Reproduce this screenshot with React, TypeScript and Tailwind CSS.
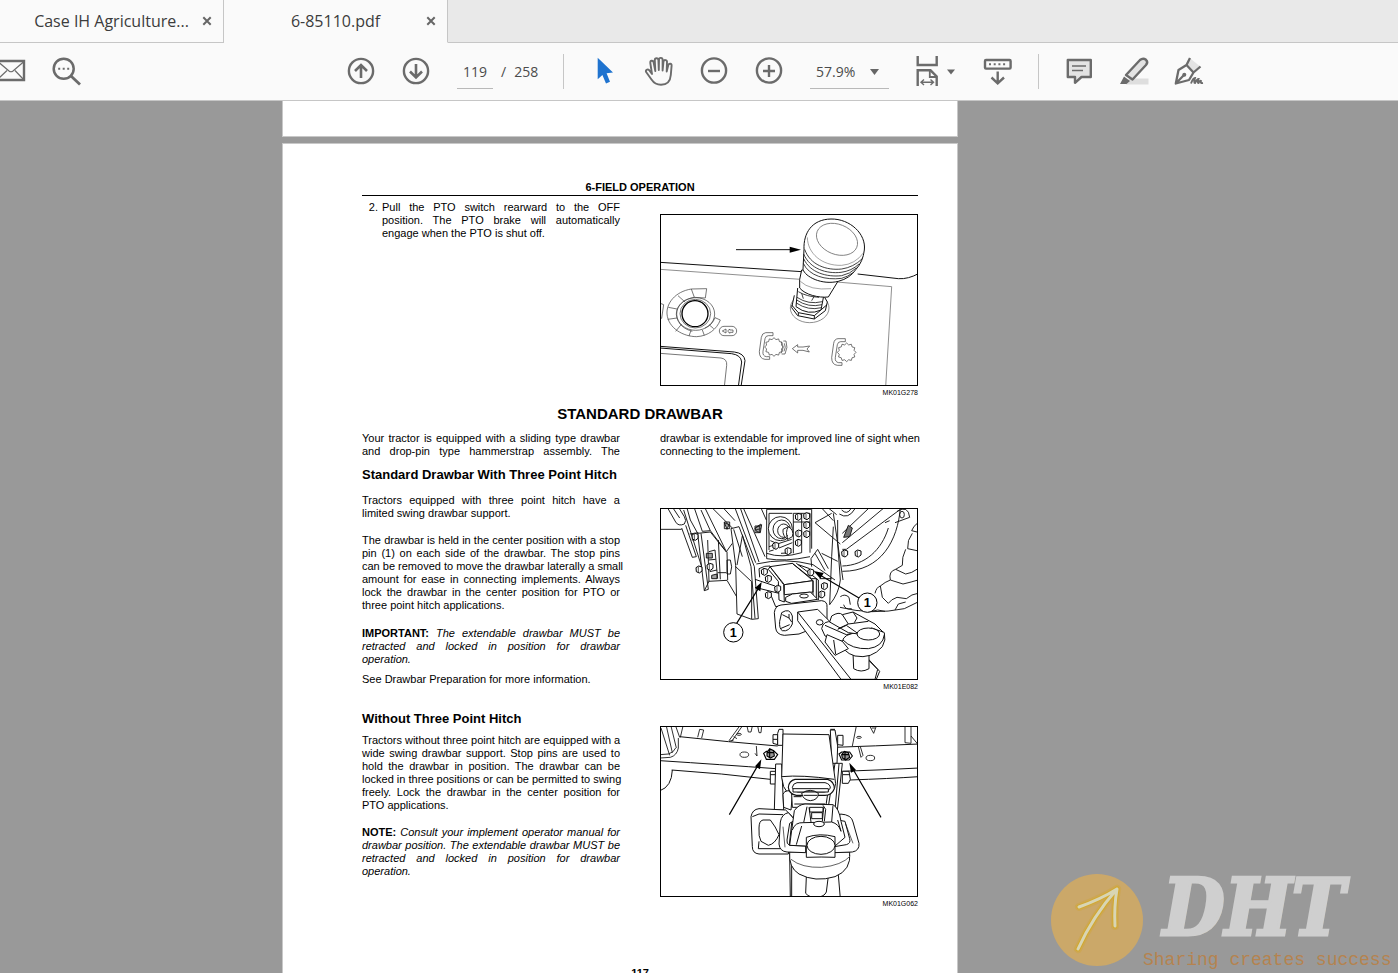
import { useState, type ReactNode } from "react";
import { clsx } from "clsx";

interface ToolProps {
  label: string;
  children: ReactNode;
  className?: string;
  viewBox?: string;
}

function Tool({ label, children, className, viewBox = "0 0 28 29" }: ToolProps) {
  return (
    <button type="button" aria-label={label} title={label} className={clsx("h-[29px] shrink-0", className ?? "w-7")}>
      <svg viewBox={viewBox} className="block h-full w-full overflow-visible" fill="none" stroke="#6b6b6b" strokeWidth="2.4">
        {children}
      </svg>
    </button>
  );
}

function Divider() {
  return <div className="-mx-px h-[35px] w-px shrink-0 bg-[#c6c6c6]" />;
}

function Tab({ title, active, onSelect }: { title: string; active: boolean; onSelect: () => void }) {
  return (
    <div
      className={clsx(
        "flex w-56 shrink-0 items-center border-r border-b border-r-[#c6c6c6] bg-[#fafafa] pl-8",
        active ? "border-b-[#fafafa]" : "border-b-[#c6c6c6]",
      )}
    >
      <button
        type="button"
        role="tab"
        aria-selected={active}
        onClick={onSelect}
        className="flex min-w-0 flex-1 justify-center text-base whitespace-nowrap text-[#3c3c3c]"
      >
        {title}
      </button>
      <button type="button" aria-label={`Close ${title}`} className="flex h-8 w-8 shrink-0 items-center justify-center">
        <svg viewBox="0 0 10 10" className="h-[10px] w-[10px]" stroke="#666" strokeWidth="2">
          <path d="M1.3 1.3 L8.7 8.7 M8.7 1.3 L1.3 8.7" />
        </svg>
      </button>
    </div>
  );
}

function Toolbar() {
  const [page, setPage] = useState("119");
  return (
    <div className="flex h-[58px] shrink-0 items-center gap-[27px] overflow-hidden border-b border-[#c6c6c6] bg-[#fafafa] text-sm text-[#4b4b4b]">
      <Tool label="Email" className="w-[25px]" viewBox="0 0 25 29">
        <path d="M-4 4 H24 V23 H-4 Z" />
        <path d="M-4 3 L9 14 Q11 15.5 13 14 L24 4.5 M-3 23 L7 13.5 M24 23 L15 13.5" strokeWidth="1.2" />
      </Tool>
      <Tool label="Find" className="mr-60 w-7">
        <circle cx="11.7" cy="11.7" r="10" strokeWidth="2.5" />
        <path d="M19 19 L28 27.5" strokeWidth="2.8" />
        <path d="M6.2 11.7 h2 M10.7 11.7 h2 M15.2 11.7 h2" strokeWidth="2" />
      </Tool>
      <Tool label="Previous page">
        <circle cx="14" cy="14" r="12.1" />
        <path d="M14 21 V8.5 M8 14 L14 8 L20 14" strokeWidth="2.6" />
      </Tool>
      <Tool label="Next page">
        <circle cx="14" cy="14" r="12.1" />
        <path d="M14 7 V20 M8 14.5 L14 20.5 L20 14.5" strokeWidth="2.6" />
      </Tool>
      <div className="flex w-[80px] shrink-0 items-center">
        <input
          aria-label="Page number"
          value={page}
          onChange={(e) => setPage(e.target.value)}
          className="h-[35px] w-9 border-b border-[#b9b9b9] bg-transparent text-center outline-none"
        />
        <span className="ml-2">/</span>
        <span className="ml-2">258</span>
      </div>
      <Divider />
      <Tool label="Select">
        <path d="M7.7 .7 V22.3 L12.4 18 L16 26.6 L20 24.8 L16.6 16.3 L23 15.6 Z" fill="#1f73cf" stroke="none" />
      </Tool>
      <Tool label="Pan">
        <path
          strokeWidth="1.9"
          strokeLinejoin="round"
          d="M7 17 L5.3 6 C5 3.3 8 3 8.6 5.3 L10.3 14 L9.8 3 C9.8 .6 13.2 .6 13.4 3 L13.8 13 L14 2.5 C14.2 .3 17.6 .3 17.6 3 V13.5 L18.5 4.5 C19 2.3 22.2 2.8 22 5 L21.7 14.5 L23.3 8 C24 6 27 6.5 26.6 8.6 L25.8 18 C25.3 24.5 21.5 27.8 16 27.8 C10.5 27.8 8.5 25.5 6.5 22.5 L1.3 15.3 C0 13 2.6 11.5 4.2 13.2 Z"
        />
      </Tool>
      <Tool label="Zoom out">
        <circle cx="14" cy="13.5" r="12.1" />
        <path d="M8 14 H20" />
      </Tool>
      <Tool label="Zoom in">
        <circle cx="14" cy="13.5" r="12.1" />
        <path d="M8 14 H20 M14 8 V20" />
      </Tool>
      <div className="relative w-[79px] shrink-0">
        <select aria-label="Zoom level" className="h-[35px] w-full appearance-none border-b border-[#b9b9b9] bg-transparent pt-[2px] pl-[6px] outline-none">
          <option>57.9%</option>
          <option>100%</option>
        </select>
        <svg viewBox="0 0 9 6" className="pointer-events-none absolute top-[15px] right-[10px] h-[6px] w-[9px]" fill="#666">
          <path d="M0 0 H9 L4.5 6 Z" />
        </svg>
      </div>
      <Tool label="Fit page" className="w-[41px]" viewBox="1 0 41 29">
        <path d="M2.7 -1 V8 H21.7 V-1 M2.7 29 V13.3 H15.5 L21.7 19.5 V29" />
        <path d="M14.8 13 V20 H22" strokeWidth="1.8" />
        <path d="M6 25.3 H18.5 M9 22.6 L6 25.3 L9 28 M15.5 22.6 L18.5 25.3 L15.5 28" strokeWidth="1.4" />
        <path d="M32 12.5 H40 L36 17.5 Z" fill="#666" stroke="none" />
      </Tool>
      <Tool label="Page controls" viewBox="1 0 28 29">
        <rect x="2" y="3" width="25.6" height="8.6" rx="1" />
        <path d="M6 7.3 h2 M10.7 7.3 h2 M15.4 7.3 h2 M20.1 7.3 h2" strokeWidth="2" />
        <path d="M14.7 14.5 V26 M8.5 20.5 L14.7 26.3 L21 20.5" />
      </Tool>
      <Divider />
      <Tool label="Comment">
        <path d="M2.8 3 H25.8 V20 H16.5 L10 25.8 V20 H2.8 Z" fill="#e3e3e3" strokeLinejoin="round" />
        <path d="M7 9 H21 M7 13.5 H18" strokeWidth="1.4" />
      </Tool>
      <Tool label="Highlight">
        <path d="M9 21.5 H28.5 V27.5 H6 Z" fill="#dedede" stroke="none" />
        <path d="M6 18 L20 3 Q23 .5 26 2.8 Q28.4 5 26 8 L12.5 22.5 Z" fill="#e3e3e3" strokeLinejoin="round" />
        <path d="M4 19.5 L10 24 L6.5 27 H0 Z" fill="#6b6b6b" stroke="none" />
      </Tool>
      <Tool label="Sign">
        <path d="M16 2 L24.5 9 L20 15 L11 8.5 Z" fill="#e3e3e3" stroke="none" />
        <path
          strokeWidth="2.3"
          strokeLinejoin="round"
          d="M15 1 L11.5 8 L3.5 13 L.8 26.5 L14 23 L18.5 15.5 L25.5 9.5 M11.5 8 L18.5 15.5 M.8 26.5 L9 18"
        />
        <circle cx="9.3" cy="17.7" r="2" fill="#6b6b6b" stroke="none" />
        <path d="M16 26.5 Q18 21 20 21 Q18.5 26 20 26 Q22 22 23.5 22 Q22 26 23.5 26 Q25 23 26 24 Q25 26.5 28 26" strokeWidth="1.9" />
      </Tool>
    </div>
  );
}

interface FigureProps {
  code: string;
  label: string;
  viewBox: string;
  className?: string;
  children: ReactNode;
}

function Figure({ code, label, viewBox, className, children }: FigureProps) {
  return (
    <figure className={className}>
      <div className="border border-black">
        <svg role="img" aria-label={label} viewBox={viewBox} className="block w-full" fill="none" stroke="#111" strokeWidth="3">
          {children}
        </svg>
      </div>
      <figcaption className="mt-[2px] text-right text-[7px] leading-[10px]">{code}</figcaption>
    </figure>
  );
}

const gear = (cx: number, cy: number) =>
  Array.from({ length: 24 }, (_, i) => {
    const a = (i * Math.PI) / 12;
    const r = i % 2 ? 23 : 28;
    return `${cx + r * Math.cos(a)},${cy + r * Math.sin(a)}`;
  }).join(" ");

function SwitchDrawing() {
  return (
    <>
      <path d="M15 157 L440 185 M608 192 L730 206 Q760 208 792 190" />
      <g stroke="#666" strokeWidth="2.2">
        <path d="M15 178 L436 208 M545 216 L710 230 L692 530" />
        <ellipse cx="464" cy="294" rx="58" ry="44" />
      </g>
      <path d="M418 256 L410 293 L428 317 L478 327 L511 302 L517 276 L505 255" fill="#fff" />
      <path d="M410 285 L430 308 L478 317 L515 285 M430 308 V317 M478 317 V327" />
      <path d="M428 234 L423 290 Q460 318 498 300 L506 258" fill="#fff" />
      <path d="M426 262 Q460 285 502 275 M425 270 Q460 294 501 284 M424 279 Q460 303 499 293 M430 245 Q455 260 492 262 M440 250 L445 266 M478 258 L470 272" strokeWidth="2.4" />
      <path d="M440 180 Q431 210 434 234 C450 254 490 264 520 261 L550 212 L600 178 Z" fill="#fff" />
      <path d="M436 214 Q465 242 528 236" stroke="#777" strokeWidth="2" />
      <path d="M447 118 C445 70 470 28 528 27 C585 26 634 72 628 120 Q624 155 603 178 Q585 205 550 214 C500 226 450 200 444 178 Z" fill="#fff" />
      <ellipse cx="546" cy="88" rx="64" ry="45" transform="rotate(22 546 88)" stroke="#666" strokeWidth="2.2" />
      <path d="M457 82 C458 130 500 168 560 166 Q600 163 626 128" stroke="#777" strokeWidth="2" />
      <path d="M449 118 C465 165 515 182 560 177 Q595 172 622 146 M446 132 C465 177 515 192 558 187 Q590 183 612 162 M446 146 C465 188 515 202 560 197 Q585 192 604 174 M445 160 C462 198 512 211 560 205 Q578 200 594 188" strokeWidth="2.4" />
      <path d="M243 119 H412" strokeWidth="3" />
      <path d="M438 119 L404 110 V128 Z" fill="#000" stroke="none" />
      <circle cx="120" cy="311" r="39" stroke="#000" strokeWidth="4" />
      <g strokeWidth="2.2" stroke="#444">
        <ellipse cx="122" cy="312" rx="57" ry="49" />
        <ellipse cx="121" cy="311" rx="46" ry="43" />
        <path d="M109 237 L155 236 L151 264 L118 262 Z M109 237 C60 245 34 280 36 312 C40 355 85 380 125 380 C160 378 185 358 196 330 L180 323 Q172 345 150 354 M118 262 C82 268 63 290 64 314 C68 345 90 358 112 364 M69 257 L90 276 M40 292 L66 297 M38 328 L66 324 M62 364 L80 342 M102 378 L108 361 M148 376 L142 360 M176 356 L162 344" />
        <rect x="193" y="349" width="52" height="28" rx="14" />
        <path d="M202 363 L213 357 V369 Z M218 363 l6 -6 v3 h10 v7 h-10 v3 z M16 280 L26 284 L20 325 L15 324" />
        <path d="M354 368 H332 Q321 369 319 382 L313 425 Q313 446 330 448 H344 V440 H334 Q322 438 324 424 L330 386 Q332 377 340 377 H354 Z" />
        <path d="M571 386 H549 Q538 387 536 400 L530 443 Q530 464 547 466 H561 V458 H551 Q539 456 541 442 L547 404 Q549 395 557 395 H571 Z" />
        <polygon points={gear(357, 411)} />
        <polygon points={gear(575, 427)} />
        <path d="M378 395 Q390 410 378 430 M385 393 H393 Q400 412 390 432 H380 M388 400 Q394 412 387 424" />
        <path d="M412 416 L428 404 V411 H444 L464 408 L456 417 L463 426 L444 421 H428 V429 Z" />
        <path d="M15 430 L198 444 Q217 447 215 466 L208 530" />
      </g>
      <path d="M15 409 L238 426 Q268 430 270 452 L258 530 M15 414 L230 431 Q258 435 260 456 L250 530" />
    </>
  );
}

const hitchBolts = [
  [430, 50], [455, 48], [455, 75], [431, 100], [455, 102], [430, 128], [362, 137], [399, 153],
  [328, 215], [340, 236], [368, 266], [467, 217], [508, 258], [500, 283], [569, 160], [609, 160], [120, 110], [132, 208], [165, 200], [340, 285],
];

function HitchDrawing() {
  return (
    <>
      <g strokeWidth="2.8">
        <path d="M38 24 L62 66 Q70 80 88 72 Q96 62 88 50 L72 24 M15 88 H80 M54 24 L74 54 M80 84 L112 172 L124 170 L92 76 M96 24 L106 60 L128 100 L148 272 L160 268 L138 100 M118 24 L142 94 L166 92 L138 30 M128 100 L166 96 L214 156 M166 92 L210 150 M158 120 L162 244 M180 150 L188 236 M162 155 L180 150 M160 180 L182 178 M164 215 L186 210 M160 244 L216 241 L246 292 M148 272 L162 244" />
        <path d="M150 24 L214 155 L232 130 M172 24 L232 84 M205 24 L240 62 M240 24 L302 188 M256 24 L312 186 M242 200 L290 245 V357 M190 120 L196 238 M216 180 H226 Q234 200 226 222 H216 Z M216 155 L218 240" />
        <path d="M228 86 L252 80 L298 200 L310 356 L290 358 L246 342 L242 196 Z" fill="#fff" />
        <path d="M242 200 L290 245 V357 M246 195 L262 108 M262 104 L288 200 L300 355 M236 88 L262 170" />
        <path d="M208 66 h16 v20 h-16 z M300 78 h14 v20 h-14 z M303 82 L318 72 M302 90 L318 86 M86 30 L140 200 M110 120 L126 118 M104 102 L130 98" />
        <path d="M300 84 L320 74 L316 98 L304 94 Z M208 68 L222 74 L216 88 Z M188 218 H214 M170 226 L186 222 V236 H170 Z M154 160 h18 v14 h-18 z" fill="#444" fillOpacity=".5" />
      </g>
      <g strokeWidth="2.8">
        <path d="M265 24 L330 170 M335 28 H468 M335 28 V176 M342 40 H412 M342 40 V150 M318 24 L334 60 M415 40 V160 M440 40 V158 M465 40 V158 M415 66 H465 M415 40 H465 M335 160 Q380 176 440 158 M335 176 Q390 186 465 170 M304 192 Q390 172 474 194 M312 206 Q330 196 345 198" />
        <ellipse cx="376" cy="86" rx="36" ry="36" fill="#fff" />
        <ellipse cx="380" cy="88" rx="26" ry="28" />
        <ellipse cx="386" cy="92" rx="18" ry="20" />
        <path d="M384 88 L400 80 Q418 90 412 110 L398 118 Q382 108 384 88 Z M400 80 Q390 96 398 118" fill="#fff" />
        <path d="M342 140 L410 118 M346 122 L360 128 M342 154 L356 150 M372 144 L412 128 M378 160 L410 158" />
        <path d="M470 24 V146 M480 68 L556 132 M480 68 L530 40 M500 24 L535 62 M520 24 L545 44 M535 40 L564 240 M548 60 V130 L556 240 Q552 280 524 314 M535 80 L530 170 L524 314 M488 148 L520 206 M488 148 L468 176 L470 200 M480 160 L510 212 M474 194 L540 240 M500 160 L548 184" />
        <path d="M562 128 L684 26 M574 148 L736 28 M562 100 L640 26 M562 148 L574 148 M553 42 Q580 60 600 26 M560 30 Q576 46 588 26 M736 24 C728 120 680 214 562 214 M700 84 C680 150 630 196 562 198 M690 68 L704 62 M726 34 Q760 14 764 52 L720 68" />
        <path d="M566 112 L580 76 L592 84 L584 110 Z" fill="#777" />
        <ellipse cx="741" cy="44" rx="7" ry="10" />
        <path d="M789 68 Q775 78 770 92 L786 96 M772 100 Q756 120 758 146 L786 152 M752 148 Q740 172 742 196 L722 208 Q700 214 706 240 L744 252 M706 240 Q690 246 676 258 L682 292 L700 310 M744 252 Q770 246 789 240 M676 258 Q664 262 660 280 M722 208 L752 222 Q770 220 789 206 M556 290 Q570 280 582 292 L586 314 M555 322 Q650 346 748 326 L789 306 M566 314 Q570 330 590 326 M700 310 Q708 298 726 292 L754 296 Q770 282 789 280 M640 336 L668 330 L690 334 M720 330 L730 312 L752 306" />
      </g>
      <g fill="#fff">
        <path d="M300 238 L360 258 M300 262 L372 280 M312 206 L314 232 M348 286 L362 320 L372 318" />
        <path d="M345 200 L386 254 L388 306 L372 300 L370 244 L340 208 Z" />
        <path d="M345 200 L412 190 L474 242 L388 254 Z" />
        <path d="M388 254 L474 242 V276 L388 284 Z" />
        <path d="M412 190 L470 236 H484 V300 M424 190 L490 240 V300 M474 242 V300 M494 236 H530 M430 194 L464 206" fill="none" />
        <path d="M392 292 L412 282 L466 276 L488 298 L410 310 L392 304 Z" />
        <path d="M378 315 L500 302 Q518 304 516 322 V368 L432 402 L388 406 Q364 404 362 384 L358 338 Q360 318 378 315 Z" />
        <path d="M380 338 Q404 322 412 348 V372 Q402 396 382 392 Q372 386 374 364 Z M382 344 L402 354 L410 366 M402 354 V342 M376 386 L404 374" />
        <path d="M428 336 L488 328 L668 508 L660 538 H558 L428 362 Z" />
        <path d="M428 336 L588 538 M626 462 L674 514 L664 538" fill="none" />
        <ellipse cx="447" cy="288" rx="13" ry="6" />
        <ellipse cx="494" cy="367" rx="10" ry="8" />
        <path d="M594 458 L596 506 Q618 520 642 506 V458 Z" />
        <path d="M500 386 Q504 360 534 366 L606 396 L642 372 L688 398 Q694 420 682 440 Q650 478 600 468 Q560 456 562 424 L510 408 Z" />
        <path d="M516 404 L510 426 L540 466 L580 446 L562 424 Z M536 420 L542 462" />
        <path d="M562 424 Q566 402 606 398 M688 404 Q684 440 640 446 Q590 448 564 420 M510 376 L574 404 L594 400" fill="none" />
        <path d="M524 366 L530 348 Q552 334 562 344 L594 336 L660 372 L684 396 L650 384 L610 402 L580 398 Z" />
        <path d="M562 344 L580 372 L550 386 M580 372 L640 364 M594 336 L606 354 L598 368 M548 388 L574 376 L608 400" fill="none" />
        <ellipse cx="640" cy="402" rx="34" ry="18" />
      </g>
      <g fill="#fff" stroke="#000">
        {hitchBolts.map(([x, y]) => (
          <g key={`${x}-${y}`}>
            <path d={`M${x - 9} ${y - 5} l8 -5 l10 3 v12 l-8 6 l-9 -4 z`} />
            <path d={`M${x - 2} ${y - 8} v16`} strokeWidth="2" />
          </g>
        ))}
      </g>
      <g stroke="#000" strokeWidth="3.5">
        <path d="M245 370 L312 262 M612 294 L496 226" />
        <path d="M320 246 L316 274 L300 264 Z M476 213 L506 219 L496 236 Z" fill="#000" stroke="none" />
        <circle cx="235" cy="397" r="29" fill="#fff" strokeWidth="3" />
        <circle cx="637" cy="308" r="29" fill="#fff" strokeWidth="3" />
      </g>
      <g fill="#000" stroke="none" className="text-[38px] font-bold" textAnchor="middle">
        <text x="235" y="411">1</text>
        <text x="637" y="322">1</text>
      </g>
    </>
  );
}

function DrawbarDrawing() {
  return (
    <>
      <path d="M74 50 Q220 66 368 78 M536 82 Q660 78 792 72 M15 122 Q200 134 362 146 M50 150 Q200 160 346 178 M560 154 Q680 150 792 144 M584 180 Q700 176 792 170 M52 150 Q50 200 15 212" />
      <g strokeWidth="2.6">
        <path d="M18 24 L44 106 M34 18 L52 98 M48 18 L64 84 M62 18 L74 52 M70 54 V84 Q66 106 46 112 L15 114 M62 84 Q56 98 40 102 L15 104 M76 52 L84 18 M128 52 L134 28 L146 30 L140 54 M222 62 L254 18 M230 64 L262 18 M236 50 L246 56 M276 18 L280 36 H288 L292 18 M308 18 L312 38 H318 L320 18 M222 64 L236 60 M304 78 L306 108 L300 100 M592 78 L604 18 M644 18 L656 40 L664 18 M650 24 H660 M750 18 V68 L768 70 V18 M768 48 L788 72 M610 80 L618 112 L624 106 L616 80" />
        <ellipse cx="252" cy="43" rx="7" ry="3" />
        <ellipse cx="612" cy="52" rx="7" ry="3" />
        <ellipse cx="268" cy="104" rx="13" ry="8" />
        <ellipse cx="646" cy="114" rx="13" ry="8" />
      </g>
      <path d="M404 400 L406 536 M410 404 V536 M548 440 L556 536" />
      <g fill="#fff">
        <path d="M354 44 H368 V74 L354 70 Z M548 46 H564 V76 L548 74 Z M540 28 H526 M346 154 H362 V192 H346 Z M562 154 H582 L586 178 L580 190 H562 Z M354 58 H368 M346 164 H362 M564 164 H584" />
        <path d="M372 28 H384 V76 H368 V40 Z M526 30 H540 L548 78 L546 130 H530 Z" />
        <path d="M362 132 H380 L386 270 H358 Z M540 130 H562 L546 280 L520 260 Z M552 132 L540 270" />
        <path d="M384 42 L522 44 L540 176 Q548 208 520 222 L410 224 Q392 216 386 200 L380 172 Z" />
        <path d="M380 170 Q440 164 538 178" />
        <path d="M384 224 Q386 212 404 212 L412 224 L408 270 L386 262 Z" />
        <path d="M410 222 H518 L512 262 H412 Z M418 252 H510 M416 230 H440" />
        <path d="M420 178 H518 Q538 184 538 206 Q530 226 510 226 H424 Q402 222 400 202 Q402 182 420 178 Z" strokeWidth="3.4" />
        <path d="M426 188 H510 Q526 192 526 204 Q520 216 508 216 H428 Q414 212 412 202 Q414 190 426 188 Z" />
        <path d="M414 206 H520 V216 H414 Z M440 220 Q444 240 466 242 Q490 240 490 220 Q466 202 440 220 Z M446 226 H486" />
        <path d="M454 470 L452 520 Q464 534 486 532 Q508 530 514 516 L520 468 Z" />
        <path d="M404 396 Q400 442 432 462 Q480 488 540 470 Q590 450 584 396 Z" />
        <path d="M408 418 Q440 444 500 442 Q560 436 586 408" strokeWidth="2" />
        <path d="M312 266 L392 270 L412 290 L400 402 L312 402 Q292 400 292 380 L288 290 Q292 268 312 266 Z" />
        <path d="M324 300 H346 Q362 320 372 344 Q360 372 340 376 L318 364 Q310 350 312 324 Q312 302 324 300 Z M292 290 L312 282 L384 284 M312 364 L310 386 H376" />
        <path d="M400 278 Q380 282 376 306 L372 372 Q374 394 396 396 L452 398 V378 L404 376 Q394 372 396 360 L404 310 L420 300 Z" />
        <path d="M556 282 Q590 284 594 306 L612 370 Q614 392 592 396 L538 398 V380 L574 374 Q588 370 584 356 L570 304 L548 300 Z" />
        <path d="M404 376 L418 272 Q430 254 450 252 L534 254 Q552 264 558 304 L570 352 L540 378 H452 Z" />
        <path d="M412 330 Q420 306 446 308 L530 306 Q552 312 558 334 M446 308 L456 260 M530 306 L534 256 M548 300 L558 334 M424 374 L440 318" fill="none" />
        <path d="M464 262 H504 V276 H464 Z M470 278 H502 V296 H470 Z M462 262 L468 306 M506 262 L502 304 M504 256 L512 268 L508 304" />
        <ellipse cx="492" cy="312" rx="16" ry="8" />
        <path d="M454 352 Q494 338 540 350 V412 Q500 410 454 412 Z" />
        <ellipse cx="498" cy="376" rx="42" ry="27" />
        <path d="M390 382 L384 320 M572 312 L594 370" strokeWidth="2" />
      </g>
      <g fill="#fff" stroke="#000" strokeWidth="3.4">
        <path d="M326 100 L334 94 H358 L368 104 L358 118 H334 Z" />
        <path d="M552 102 L560 96 H584 L592 108 L582 120 H560 Z" />
        <path d="M336 98 L344 86 L356 92 L358 108 L346 114 L336 108 Z M344 86 V114 M336 98 H358" fill="#999" />
        <path d="M560 104 L568 94 L580 98 L584 112 L572 120 L562 114 Z M570 94 V120 M560 104 H582" fill="#999" />
      </g>
      <g stroke="#000" strokeWidth="3.5">
        <path d="M223 284 L310 134 M678 292 L592 144" />
        <path d="M319 118 L315 148 L300 139 Z M583 128 L603 150 L588 158 Z" fill="#000" stroke="none" />
      </g>
    </>
  );
}

// Each entry is one printed line; all but the last are spread over the column.
function Lines({ lines, className, full }: { lines: ReactNode[]; className?: string; full?: boolean }) {
  return (
    <p className={className}>
      {lines.map((line, i) => (
        <span
          key={i}
          className={clsx("block whitespace-nowrap", (full || i < lines.length - 1) && "[text-align-last:justify]")}
        >
          {line}
        </span>
      ))}
    </p>
  );
}

function ManualPage() {
  return (
    <article className="shrink-0 border-x border-t border-[#c8c8c8] bg-white pt-[37px] pr-[39px] pb-10 pl-[79px] font-['Liberation_Sans',Arial,sans-serif] text-[11px] leading-[13px] text-black">
      <header className="border-b border-black pb-px text-center font-bold">6-FIELD OPERATION</header>

      <section className="grid grid-cols-2 gap-10">
        <ol className="pt-[5px]">
          <li className="flex gap-1">
            <span className="w-4 text-right">2.</span>
            <Lines
              className="flex-1"
              lines={[
                "Pull the PTO switch rearward to the OFF",
                "position. The PTO brake will automatically",
                "engage when the PTO is shut off.",
              ]}
            />
          </li>
        </ol>
        <Figure code="MK01G278" label="PTO switch" viewBox="18 15 768 510" className="pt-[18px]">
          <SwitchDrawing />
        </Figure>
      </section>

      <h1 className="mt-[6px] text-center text-[15px] leading-5 font-bold">STANDARD DRAWBAR</h1>
      <section className="mt-2 grid grid-cols-2 gap-10">
        <Lines full lines={["Your tractor is equipped with a sliding type drawbar", "and drop-pin type hammerstrap assembly. The"]} />
        <Lines lines={["drawbar is extendable for improved line of sight when", "connecting to the implement."]} />
      </section>

      <h2 className="mt-[9px] text-[13px] leading-4 font-bold">Standard Drawbar With Three Point Hitch</h2>
      <section className="grid grid-cols-2 gap-10">
        <div className="pt-[11px]">
          <Lines lines={["Tractors equipped with three point hitch have a", "limited swing drawbar support."]} />
          <Lines
            className="mt-[14px]"
            lines={[
              "The drawbar is held in the center position with a stop",
              "pin (1) on each side of the drawbar. The stop pins",
              "can be removed to move the drawbar laterally a small",
              "amount for ease in connecting implements. Always",
              "lock the drawbar in the center position for PTO or",
              "three point hitch applications.",
            ]}
          />
          <Lines
            className="mt-[15px] italic"
            lines={[
              <><strong className="not-italic">IMPORTANT:</strong> The extendable drawbar MUST be</>,
              "retracted and locked in position for drawbar",
              "operation.",
            ]}
          />
          <p className="mt-[7px]">See Drawbar Preparation for more information.</p>
        </div>
        <Figure code="MK01E082" label="Drawbar with three point hitch" viewBox="18 27 768 510" className="pt-[25px]">
          <HitchDrawing />
        </Figure>
      </section>

      <h2 className="mt-[19px] text-[13px] leading-4 font-bold">Without Three Point Hitch</h2>
      <section className="-mt-px grid grid-cols-2 gap-10">
        <div className="pt-2">
          <Lines
            lines={[
              "Tractors without three point hitch are equipped with a",
              "wide swing drawbar support. Stop pins are used to",
              "hold the drawbar in position. The drawbar can be",
              "locked in three positions or can be permitted to swing",
              "freely. Lock the drawbar in the center position for",
              "PTO applications.",
            ]}
          />
          <Lines
            className="mt-[14px] italic"
            lines={[
              <><strong className="not-italic">NOTE:</strong> Consult your implement operator manual for</>,
              "drawbar position. The extendable drawbar MUST be",
              "retracted and locked in position for drawbar",
              "operation.",
            ]}
          />
        </div>
        <Figure code="MK01G062" label="Drawbar without three point hitch" viewBox="18 21 768 507">
          <DrawbarDrawing />
        </Figure>
      </section>

      <footer className="mt-[58px] text-center font-bold">117</footer>
    </article>
  );
}

function Watermark() {
  return (
    <div className="pointer-events-none absolute right-0 bottom-0 flex items-start">
      <svg viewBox="0 0 92 92" className="mt-px h-[92px] w-[92px]" fill="none" strokeLinecap="round" strokeLinejoin="round">
        <circle cx="46" cy="46" r="46" fill="#cba869" />
        <g stroke="#d0a640" strokeWidth="8" opacity=".5">
          <path d="M27 75 Q42 42 66 15 M28 33 Q50 25 66 15 Q63 32 64 52" />
        </g>
        <g stroke="#d2a92f" strokeWidth="5">
          <path d="M27 75 Q42 42 66 15 M28 33 Q50 25 66 15 Q63 32 64 52" />
        </g>
        <g stroke="#d8d5b4" strokeWidth="3">
          <path d="M27 75 Q42 42 66 15 M28 33 Q50 25 66 15 Q63 32 64 52" />
        </g>
      </svg>
      <div className="w-[255px]">
        <p className="pl-5 font-['DejaVu_Serif_Condensed','DejaVu_Serif',serif] text-[79px] leading-[70px] font-bold text-[#cfcfcf] italic [-webkit-text-stroke:3px_#cfcfcf] [text-shadow:1px_1px_0_#d0b070]">
          DHT
        </p>
        <p className="mt-1 font-['Liberation_Mono',monospace] text-lg leading-[26px] whitespace-nowrap text-[#b5834f]">
          Sharing creates success
        </p>
      </div>
    </div>
  );
}

const tabs = ["Case IH Agriculture...", "6-85110.pdf"];

export default function App() {
  const [active, setActive] = useState(tabs[1]);
  return (
    <div className="relative flex h-screen flex-col overflow-hidden bg-[#999] font-['Open_Sans',sans-serif]">
      <div role="tablist" className="flex h-[43px] shrink-0 bg-[#e9e9e9]">
        {tabs.map((title) => (
          <Tab key={title} title={title} active={title === active} onSelect={() => setActive(title)} />
        ))}
        <div className="flex-1 border-b border-[#c6c6c6]" />
      </div>
      <Toolbar />
      <main className="min-h-0 flex-1 overflow-y-auto pr-[158px] [scrollbar-width:none]">
        <div className="mx-auto flex w-full max-w-[676px] flex-col gap-[6px]">
          <div className="h-9 shrink-0 border-x border-b border-[#c8c8c8] bg-white" />
          <ManualPage />
        </div>
      </main>
      <Watermark />
    </div>
  );
}
